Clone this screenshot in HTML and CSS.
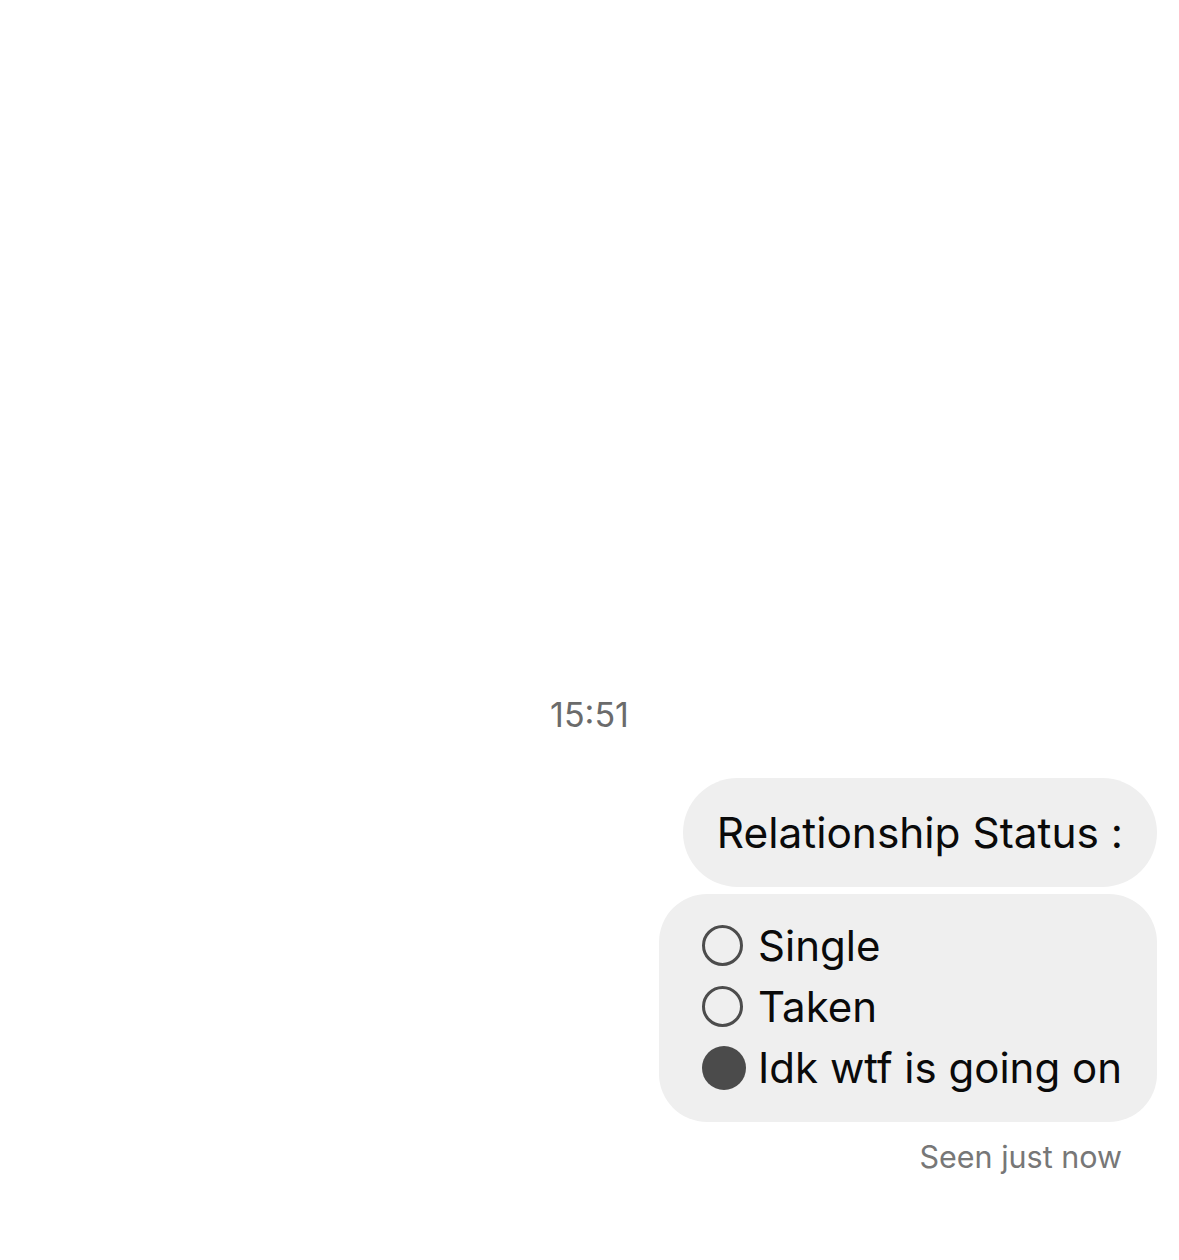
FILE: index.html
```html
<!DOCTYPE html>
<html>
<head>
<meta charset="utf-8">
<link rel="stylesheet" href="styles.css">
</head>
<body>
<div class="screen">
  <div class="time">15:51</div>
  <div class="thread">
    <div class="bubble title">Relationship Status :</div>
    <div class="bubble poll">
      <div class="option"><span class="radio"></span><span class="label">Single</span></div>
      <div class="option"><span class="radio"></span><span class="label">Taken</span></div>
      <div class="option"><span class="radio on"></span><span class="label">Idk wtf is going on</span></div>
    </div>
  </div>
  <div class="seen">Seen just now</div>
</div>
</body>
</html>
```

FILE: styles.css
```css
html, body {
  margin: 0;
  padding: 0;
  background: #ffffff;
}
.screen {
  width: 1179px;
  height: 1260px;
  box-sizing: border-box;
  padding-right: 22px;
  display: flex;
  flex-direction: column;
  align-items: flex-end;
  font-family: Inter, "Liberation Sans", sans-serif;
  color: #0a0a0a;
}
.time {
  align-self: center;
  margin-top: 695px;
  margin-right: -22px;
  font-size: 34px;
  line-height: 40px;
  color: #6b6b6b;
}
.thread {
  margin-top: 43px;
  display: flex;
  flex-direction: column;
  align-items: flex-end;
  gap: 7px;
}
.bubble {
  background: #efefef;
  box-sizing: border-box;
}
.title {
  height: 109px;
  border-radius: 55px;
  padding: 0 34px;
  display: flex;
  align-items: center;
  font-size: 42.4px;
}
.poll {
  border-radius: 48px;
  padding: 21px 35px 24px 43px;
  display: flex;
  flex-direction: column;
  font-size: 42px;
}
.option {
  height: 61px;
  display: flex;
  align-items: center;
  gap: 15px;
}
.radio {
  width: 41px;
  height: 41px;
  box-sizing: border-box;
  border: 3.5px solid #4c4c4c;
  border-radius: 50%;
  flex: none;
}
.radio.on {
  width: 44px;
  height: 44px;
  margin-right: -3px;
  border: none;
  background: #4b4b4b;
}
.seen {
  margin-top: 15px;
  margin-right: 35px;
  font-size: 30.5px;
  line-height: 40px;
  color: #777;
}
```
